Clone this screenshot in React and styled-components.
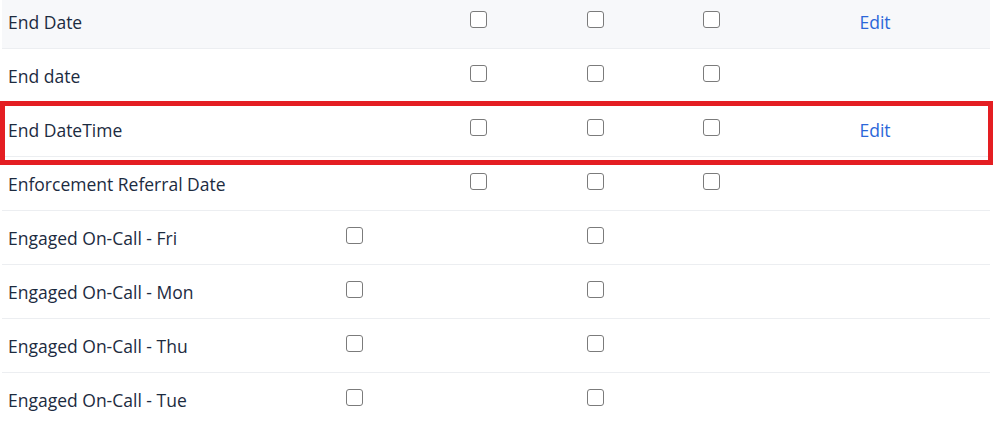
import React from 'react'
import styled, { createGlobalStyle } from "styled-components";

const GlobalStyle = createGlobalStyle`
body{
  margin: 0;
  background: #ffffff;
  font-family: "Open Sans", "Noto Sans", Arial, sans-serif;
}
`;

const Page = styled.div`
width: 1008px;
height: 426px;
overflow: hidden;
padding: 0 18px 0 2px;
box-sizing: border-box;
`;

const Table = styled.div`
margin-top: -5px;
display: flex;
flex-direction: column;
`;

const Row = styled.div`
position: relative;
display: grid;
grid-template-columns: 290px 124px 124px 110px 122px 206px 1fr;
align-items: center;
height: 53px;
border-bottom: 1px solid #eceef1;
background: ${props => props.$shaded ? '#f7f8fa' : '#ffffff'};
${props => props.$marked && `
  z-index: 1;
  &::after{
    content: '';
    position: absolute;
    left: -2px;
    right: -3px;
    top: -2px;
    bottom: -9px;
    border: 5px solid #e41e22;
    pointer-events: none;
  }
`}
`;

const Name = styled.div`
padding-left: 6px;
font-size: 17.5px;
color: #1c2b3f;
`;

const Cell = styled.div`
display: flex;
justify-content: center;
align-items: center;
margin-top: ${props => props.$raised ? '-4px' : '0'};
`;

const Box = styled.span`
display: block;
width: 15px;
height: 15px;
border: 1.5px solid #7b7b7b;
border-radius: 3px;
background: #fff;
`;

const EditLink = styled.a`
font-size: 17.5px;
color: #2b67d9;
cursor: pointer;
`;

const rows = [
  { name: 'End Date', checks: [false, true, true, true], edit: true, shaded: true },
  { name: 'End date', checks: [false, true, true, true] },
  { name: 'End DateTime', checks: [false, true, true, true], edit: true, marked: true },
  { name: 'Enforcement Referral Date', checks: [false, true, true, true] },
  { name: 'Engaged On-Call - Fri', checks: [true, false, true, false] },
  { name: 'Engaged On-Call - Mon', checks: [true, false, true, false] },
  { name: 'Engaged On-Call - Thu', checks: [true, false, true, false] },
  { name: 'Engaged On-Call - Tue', checks: [true, false, true, false] },
];

function App() {
  return (
    <Page>
      <GlobalStyle />
      <Table>
        {rows.map(r => (
          <Row key={r.name} $shaded={r.shaded} $marked={r.marked}>
            <Name>{r.name}</Name>
            {r.checks.map((c, i) => (
              <Cell key={i} $raised>{c && <Box />}</Cell>
            ))}
            <Cell>{r.edit && <EditLink>Edit</EditLink>}</Cell>
            <div />
          </Row>
        ))}
      </Table>
    </Page>
  )
}
export default App;
